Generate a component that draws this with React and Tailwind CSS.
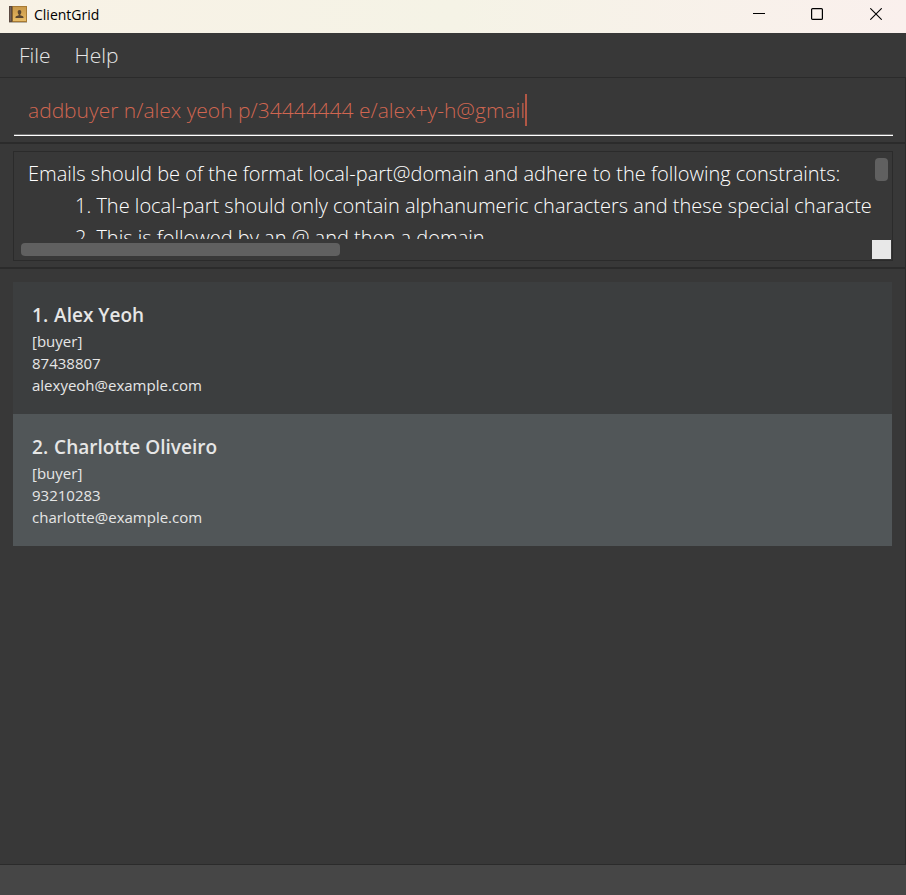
import React from "react";

const CLIENTS = [
  { id: 1, name: "Alex Yeoh", role: "buyer", phone: "87438807", email: "alexyeoh@example.com" },
  { id: 2, name: "Charlotte Oliveiro", role: "buyer", phone: "93210283", email: "charlotte@example.com" },
];

const RESULT = [
  "Emails should be of the format local-part@domain and adhere to the following constraints:",
  "\t1. The local-part should only contain alphanumeric characters and these special characters, excluding the parentheses, (+_.-).",
  "\t2. This is followed by an @ and then a domain",
].join("\n");

function AddressBookIcon() {
  return (
    <svg width="18" height="18" viewBox="0 0 18 18" aria-hidden="true">
      <defs>
        <linearGradient id="cover" x1="0" y1="0" x2="0" y2="1">
          <stop offset="0" stopColor="#c9994a" />
          <stop offset="0.5" stopColor="#d8a854" />
          <stop offset="1" stopColor="#e8bd68" />
        </linearGradient>
      </defs>
      <rect x="0" y="16" width="18" height="1" fill="#b9b2a4" />
      <rect x="0" y="0" width="18" height="16" fill="#a87a34" />
      <rect x="4" y="1" width="13" height="14" fill="url(#cover)" />
      <rect x="0" y="0" width="3" height="16" fill="#5b4a42" />
      <rect x="1" y="1" width="1" height="14" fill="#75635a" />
      <rect x="3" y="0" width="1" height="16" fill="#8a672f" />
      <path d="M10.5 4C11.7 4 12.3 4.9 12.3 6C12.3 7 11.8 7.9 11.3 8.4V9.3L14 10.2C14.3 10.4 14.5 10.8 14.5 12H6.5C6.5 10.8 6.7 10.4 7 10.2L9.7 9.3V8.4C9.2 7.9 8.7 7 8.7 6C8.7 4.9 9.3 4 10.5 4Z" fill="#5a4630" />
    </svg>
  );
}

function TitleBar() {
  return (
    <header className="flex h-[33px] shrink-0 items-center justify-between bg-linear-to-r from-[#f8f2e6] via-[#f5f3e6] to-[#faf0ed] pl-[9px] text-black">
      <div className="flex items-center gap-[7px] pb-1">
        <AddressBookIcon />
        <h1 className="text-[14px] leading-5">ClientGrid</h1>
      </div>
      <div className="flex pb-[5px]">
        <button type="button" aria-label="Minimize" className="flex w-[58px] justify-center">
          <svg width="12" height="12" viewBox="0 0 12 12" aria-hidden="true">
            <path d="M0 5.5H12" stroke="black" fill="none" />
          </svg>
        </button>
        <button type="button" aria-label="Maximize" className="flex w-[58px] justify-center">
          <svg width="12" height="12" viewBox="0 0 12 12" aria-hidden="true">
            <rect x="0.6" y="0.6" width="10.8" height="10.8" rx="1" stroke="black" strokeWidth="1.2" fill="none" />
          </svg>
        </button>
        <button type="button" aria-label="Close" className="flex w-[60px] justify-center">
          <svg width="12" height="12" viewBox="0 0 12 12" aria-hidden="true">
            <path d="M0.3 0.3L11.7 11.7M11.7 0.3L0.3 11.7" stroke="black" strokeWidth="1.1" fill="none" />
          </svg>
        </button>
      </div>
    </header>
  );
}

function ClientCard({ client }) {
  return (
    <li className="h-[132px] bg-[#3c3e3f] px-[19px] pt-[18px] text-[15px] leading-[22px] text-[#e6e6e6] even:bg-[#515658]">
      <h2 className="flex gap-[6px] text-[19px] leading-[30px] font-semibold">
        <span>{client.id}.</span>
        <span>{client.name}</span>
      </h2>
      <p>[{client.role}]</p>
      <p>{client.phone}</p>
      <p>{client.email}</p>
    </li>
  );
}

export default function App() {
  return (
    <div className="flex min-h-screen flex-col bg-[#383838] font-['Open_Sans',sans-serif]">
      <TitleBar />
      <nav className="flex h-11 shrink-0 items-center gap-6 px-[19px] text-[21px] leading-8 font-light text-[#e6e6e6]">
        <button type="button">File</button>
        <button type="button">Help</button>
      </nav>
      <main className="flex grow flex-col border-r border-[#2b2b2b]">
        <section className="h-[67px] shrink-0 border-y border-b-2 border-[#2b2b2b] pt-4 pr-3 pl-[14px]">
          <div className="flex h-[42px] items-start border-b border-b-white pl-[14px] shadow-[inset_0_-1px_#707070]">
            <input
              type="text"
              aria-label="Command"
              defaultValue="addbuyer n/alex yeoh p/34444444 e/alex+y-h@gmail"
              className="field-sizing-content h-8 text-[21px] font-light text-[#d06651] outline-none"
            />
            <span className="h-8 w-[2px] bg-[#b25745]" />
          </div>
        </section>
        <section className="shrink-0 border-b-2 border-[#2b2b2b] pt-[7px] pr-3 pb-[6px] pl-[13px]">
          <div className="grid h-[110px] grid-cols-[1fr_20px] grid-rows-[1fr_20px] border border-[#2b2b2b]">
            <textarea
              readOnly
              wrap="off"
              aria-label="Result"
              value={RESULT}
              className="h-[87px] w-full resize-none overflow-hidden pt-[6px] pl-[14px] text-[20px] leading-8 font-light text-white outline-none [tab-size:47px]"
            />
            <div className="flex pt-[6px] pl-[3px]">
              <div className="h-[23px] w-[13px] rounded-[4px] bg-[#606060]" />
            </div>
            <div className="flex items-start pt-[3px] pl-[7px]">
              <div className="h-[13px] w-[319px] rounded-[4px] bg-[#606060]" />
            </div>
            <div className="mr-px mb-px bg-[#e8e8e8]" />
          </div>
        </section>
        <section className="grow px-[13px] pt-[13px]">
          <ul>
            {CLIENTS.map((client) => (
              <ClientCard key={client.id} client={client} />
            ))}
          </ul>
        </section>
      </main>
      <footer className="h-[31px] shrink-0 border-t border-[#2b2b2b] bg-[#464646]" />
    </div>
  );
}
